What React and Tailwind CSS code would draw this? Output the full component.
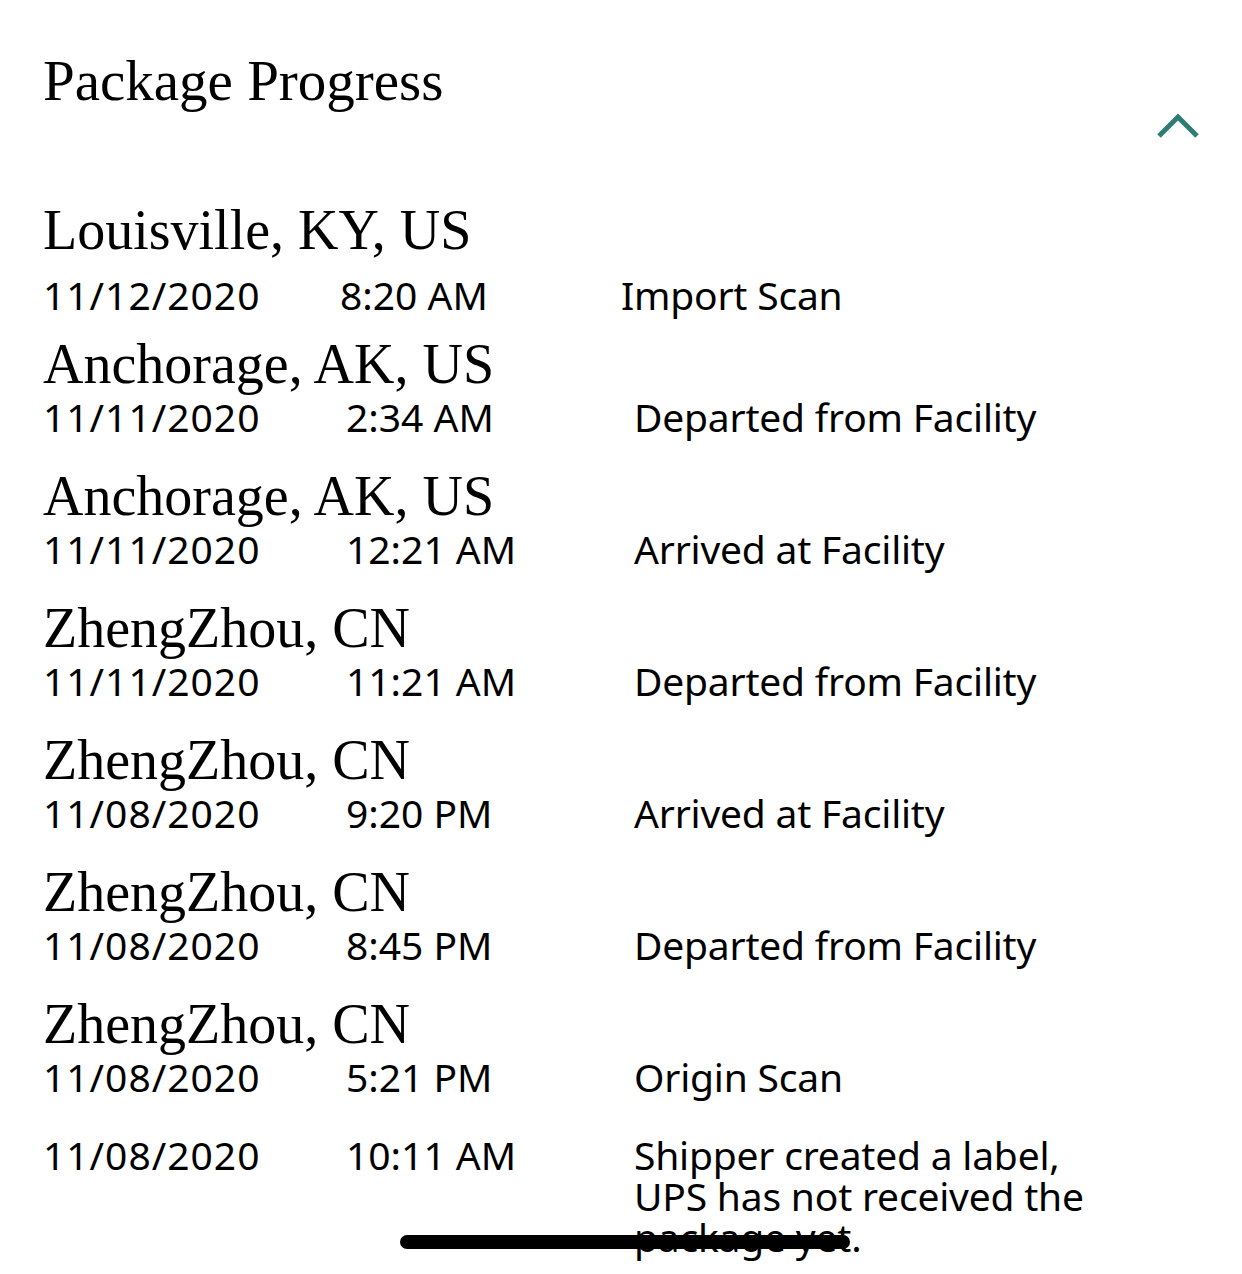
import React from "react";

const events = [
  { city: "Louisville, KY, US", date: "11/12/2020", time: "8:20 AM", status: "Import Scan", first: true },
  { city: "Anchorage, AK, US", date: "11/11/2020", time: "2:34 AM", status: "Departed from Facility" },
  { city: "Anchorage, AK, US", date: "11/11/2020", time: "12:21 AM", status: "Arrived at Facility" },
  { city: "ZhengZhou, CN", date: "11/11/2020", time: "11:21 AM", status: "Departed from Facility" },
  { city: "ZhengZhou, CN", date: "11/08/2020", time: "9:20 PM", status: "Arrived at Facility" },
  { city: "ZhengZhou, CN", date: "11/08/2020", time: "8:45 PM", status: "Departed from Facility" },
  { city: "ZhengZhou, CN", date: "11/08/2020", time: "5:21 PM", status: "Origin Scan" },
];

const serif = "font-['Liberation_Serif',serif]";
const sans = "font-['Noto_Sans',sans-serif]";

const Chevron = () => (
  <svg width="44" height="28" viewBox="0 0 44 28" fill="none">
    <polyline
      points="3,24 22,5 41,24"
      stroke="#2f7d75"
      strokeWidth="5"
      strokeLinecap="butt"
      strokeLinejoin="miter"
    />
  </svg>
);

const EventRow = ({ event }) => (
  <div className={event.first ? "mb-[17px]" : "mb-[27px]"}>
    <div className={`${serif} text-[56px] leading-[61px] text-black`}>{event.city}</div>
    <div
      className={`${sans} grid text-[39px] leading-[44px] text-black ${
        event.first ? "grid-cols-[297px_281px_1fr] mt-[12px]" : "grid-cols-[303px_288px_1fr]"
      }`}
    >
      <span className="tracking-[1px]">{event.date}</span>
      <span>{event.time}</span>
      <span className="tracking-[-0.2px]">{event.status}</span>
    </div>
  </div>
);

export default function App() {
  return (
    <div className="relative w-[1242px] h-[1274px] overflow-hidden bg-white">
      <div className="pl-[43px] pr-[42px] pt-[51px]">
        <div className="flex justify-between items-start">
          <h1 className={`${serif} text-[57px] leading-[60px] text-black`}>Package Progress</h1>
          <div className="mt-[61px]">
            <Chevron />
          </div>
        </div>

        <div className="mt-[60px]">
          {events.map((e, i) => (
            <EventRow key={i} event={e} />
          ))}
          {/* margins collapse with the row above, so this is the full gap */}
          <div className={`${sans} grid grid-cols-[303px_288px_460px] mt-[35px] text-[39px] leading-[41px] text-black`}>
            <span className="tracking-[1px]">11/08/2020</span>
            <span>10:11 AM</span>
            <span className="tracking-[-0.2px]">Shipper created a label, UPS has not received the package yet.</span>
          </div>
        </div>
      </div>

      <div className="absolute left-[400px] top-[1235px] w-[450px] h-[14px] rounded-full bg-black" />
    </div>
  );
}
